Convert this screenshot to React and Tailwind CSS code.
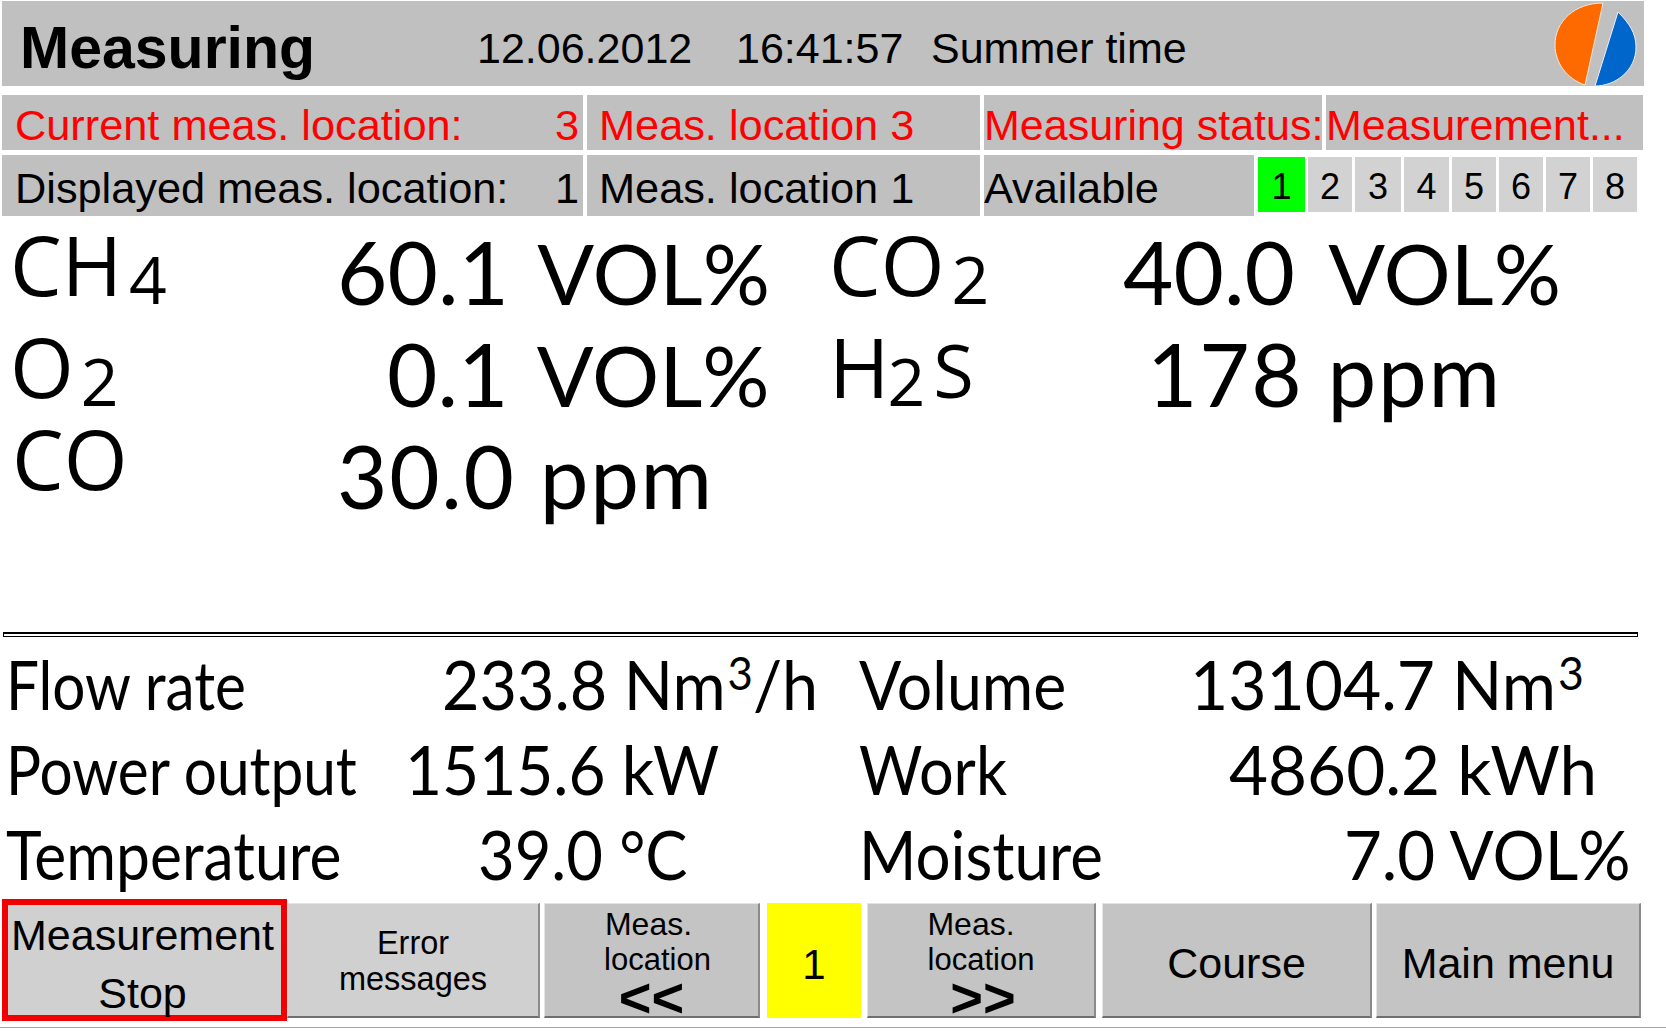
import React from 'react';

const Vol = ({ gap = 'ml-[6px]' }) => <span className={`text-[84px] ${gap}`}>VOL%</span>;

const topRows = [
  [
    { label: 'CH', sub: '4', value: <>60.1 <Vol /></>, cols: 'grid-cols-[327px_1fr]' },
    { label: 'CO', sub: '2', value: <>40.0 <Vol gap="ml-[11px]" /></>, cols: 'grid-cols-[294px_1fr]' },
  ],
  [
    { label: 'O', sub: '2', value: <>0.1 <Vol /></>, cols: 'grid-cols-[377px_1fr]' },
    { label: 'H', sub: '2', after: 'S', subGap: '-ml-[2px]', value: '178 ppm', track: 'tracking-[1.7px]', cols: 'grid-cols-[318px_1fr]' },
  ],
  [{ label: 'CO', lift: '-mt-[10px] ml-[2px]', value: '30.0 ppm', track: 'tracking-[1.7px]', cols: 'grid-cols-[327px_1fr]' }],
];

const Cube = () => <span className="text-[46px] leading-none align-[20px] ml-[2px]">3</span>;

const bottomRows = [
  [
    { label: 'Flow rate', ls: 'scale-x-[0.86]', value: <>233.8 Nm<Cube />/h</>, vs: 'scale-x-[0.95]', cols: 'grid-cols-[436px_1fr]' },
    { label: 'Volume', ls: 'scale-x-[0.92]', value: <>13104.7 Nm<Cube /></>, vs: 'scale-x-[0.97]', cols: 'grid-cols-[331px_1fr]' },
  ],
  [
    { label: 'Power output', ls: 'scale-x-[0.86]', value: '1515.6 kW', vs: 'scale-x-[0.94]', cols: 'grid-cols-[399px_1fr]' },
    { label: 'Work', ls: 'scale-x-[0.9]', value: '4860.2 kWh', vs: 'scale-x-[0.99]', cols: 'grid-cols-[370px_1fr]' },
  ],
  [
    { label: 'Temperature', ls: 'scale-x-[0.89]', value: '39.0 °C', vs: 'scale-x-[0.93]', cols: 'grid-cols-[472px_1fr]' },
    { label: 'Moisture', ls: 'scale-x-[0.91]', value: '7.0 VOL%', vs: 'scale-x-[0.96]', cols: 'grid-cols-[485px_1fr]' },
  ],
];

const stations = [
  ['2', 'w-[44px]'],
  ['3', 'w-[46px]'],
  ['4', 'w-[45px]'],
  ['5', 'w-[44px]'],
  ['6', 'w-[44px]'],
  ['7', 'w-[44px]'],
  ['8', 'w-[44px]'],
];

const cell = 'flex items-center bg-[#c0c0c0] h-full overflow-hidden whitespace-nowrap pt-[5px]';
const btn = 'flex flex-col items-center justify-center h-[115px] border-b-2 border-r-2 border-t border-l border-b-[#6f6f6f] border-r-[#8a8a8a] border-t-[#e4e4e4] border-l-[#e4e4e4] text-center text-black';

const Logo = () => (
  <svg width="84" height="86" viewBox="0 0 84 86">
    <path d="M50 2 C22 2 2 20 2 44 C2 62 14 78 32 84 Z" fill="#ff6a00" stroke="#f5e6d8" strokeWidth="1" />
    <path d="M65 11 C76 22 83 32 83 46 C83 70 62 85 42 85 Z" fill="#0066cc" stroke="#e8f0f8" strokeWidth="1" />
  </svg>
);

export default function App() {
  return (
    <div className="w-[1666px] h-[1031px] bg-white text-black overflow-hidden font-['Liberation_Sans',sans-serif]">
      <div className="pt-px pl-[2px] w-[1644px]">
        <div className="flex items-center h-[85px] w-[1642px] bg-[#c0c0c0] pt-[10px]">
          <span className="ml-[18px] w-[457px] font-bold text-[59px]">Measuring</span>
          <span className="text-[43px] w-[259px]">12.06.2012</span>
          <span className="text-[43px] w-[195px]">16:41:57</span>
          <span className="text-[43px]">Summer time</span>
          <div className="ml-auto mr-[7px] -mt-[10px]">
            <Logo />
          </div>
        </div>

        <div className="flex gap-[4px] h-[55px] mt-[9px] text-[43.3px] text-[#ff0000]">
          <div className={`${cell} w-[581px] justify-between pl-[13px] pr-[4px]`}>
            <span>Current meas. location:</span>
            <span>3</span>
          </div>
          <div className={`${cell} w-[393px] pl-[12px]`}>Meas. location 3</div>
          <div className={`${cell} w-[338px] text-[43px]`}>Measuring status:</div>
          <div className={`${cell} w-[317px] text-[43px]`}>Measurement...</div>
        </div>

        <div className="flex gap-[4px] h-[61px] mt-[5px] text-[43.3px]">
          <div className={`${cell} w-[581px] justify-between pl-[13px] pr-[4px]`}>
            <span>Displayed meas. location:</span>
            <span>1</span>
          </div>
          <div className={`${cell} w-[393px] pl-[12px]`}>Meas. location 1</div>
          <div className={`${cell} w-[270px]`}>Available</div>
          <div className="flex gap-[3px] pt-[2px] h-[57px] text-[36px]">
            <div className="flex items-center justify-center w-[47px] pt-[5px] bg-[#00ff00]">1</div>
            {stations.map(([n, w]) => (
              <div key={n} className={`flex items-center justify-center pt-[5px] bg-[#d2d2d2] ${w}`}>{n}</div>
            ))}
          </div>
        </div>
      </div>

      {/* gas readings */}
      <div className="h-[416px] pl-[10px]">
        {topRows.map((row, i) => (
          <div key={i} className="grid grid-cols-[819px_1fr] h-[102px]">
            {row.map((item) => (
              <div key={item.label + item.sub} className={`grid ${item.cols} whitespace-nowrap`}>
                <div className={`flex items-baseline h-[96px] font-['Open_Sans',sans-serif] font-medium text-[82px] leading-[96px] ${item.lift || ''}`}>
                  <span>{item.label}</span>
                  {item.sub && <span className={`text-[66px] translate-y-[8px] ${item.subGap || 'ml-[7px]'}`}>{item.sub}</span>}
                  {item.after && <span className="text-[74px] ml-[8px]">{item.after}</span>}
                </div>
                <div className={`font-['Lato',sans-serif] text-[87px] leading-[100px] mt-[6px] ${item.track || ''}`}>{item.value}</div>
              </div>
            ))}
          </div>
        ))}
      </div>

      <div className="w-[1635px] h-[5px] ml-[3px] border border-t-2 border-black" />

      {/* flow values */}
      <div className="h-[262px] pl-[6px] pt-[4px] font-['Lato',sans-serif] text-[68px] leading-[85px]">
        {bottomRows.map((row, i) => (
          <div key={i} className="grid grid-cols-[853px_1fr] h-[85px]">
            {row.map((item) => (
              <div key={item.label} className={`grid ${item.cols} whitespace-nowrap`}>
                <span className={`origin-left ${item.ls}`}>{item.label}</span>
                <span className={`origin-left ${item.vs}`}>{item.value}</span>
              </div>
            ))}
          </div>
        ))}
      </div>

      {/* softkeys */}
      <div className="flex items-center h-[122px] pl-[2px]">
        <div className="flex flex-col items-center justify-center w-[285px] h-[122px] pt-[8px] pr-[4px] border-[6px] border-[#f00000] bg-[#d0d0d0] text-[43px] leading-[58px]">
          <span>Measurement</span>
          <span>Stop</span>
        </div>
        <div className={`${btn} w-[253px] pt-[3px] bg-[#d0d0d0] text-[32.5px] leading-[36px]`}>
          <span>Error</span>
          <span>messages</span>
        </div>
        <div className={`${btn} ml-[4px] w-[216px] bg-[#c4c4c4] text-[31px] leading-[36px]`}>
          <span className="text-[32px] -translate-x-[3px]">Meas.</span>
          <span className="translate-x-[6px]">location</span>
          <span className="font-bold text-[56px] leading-[36px] translate-y-[2px]">&lt;&lt;</span>
        </div>
        <div className="flex items-center justify-center ml-[7px] w-[94px] h-[115px] pt-[8px] bg-[#ffff00] text-[42px]">1</div>
        <div className={`${btn} ml-[6px] w-[229px] bg-[#c4c4c4] text-[31px] leading-[36px]`}>
          <span className="text-[32px] -translate-x-[10px]">Meas.</span>
          <span>location</span>
          <span className="font-bold text-[56px] leading-[36px] translate-x-[2px] translate-y-[2px]">&gt;&gt;</span>
        </div>
        <div className={`${btn} ml-[6px] w-[270px] pt-[8px] bg-[#c4c4c4] text-[43px]`}>Course</div>
        <div className={`${btn} ml-[4px] w-[265px] pt-[8px] bg-[#c4c4c4] text-[43px]`}>Main menu</div>
      </div>
      <div className="mt-[6px] h-px bg-[#a8a8a0]" />
    </div>
  );
}
